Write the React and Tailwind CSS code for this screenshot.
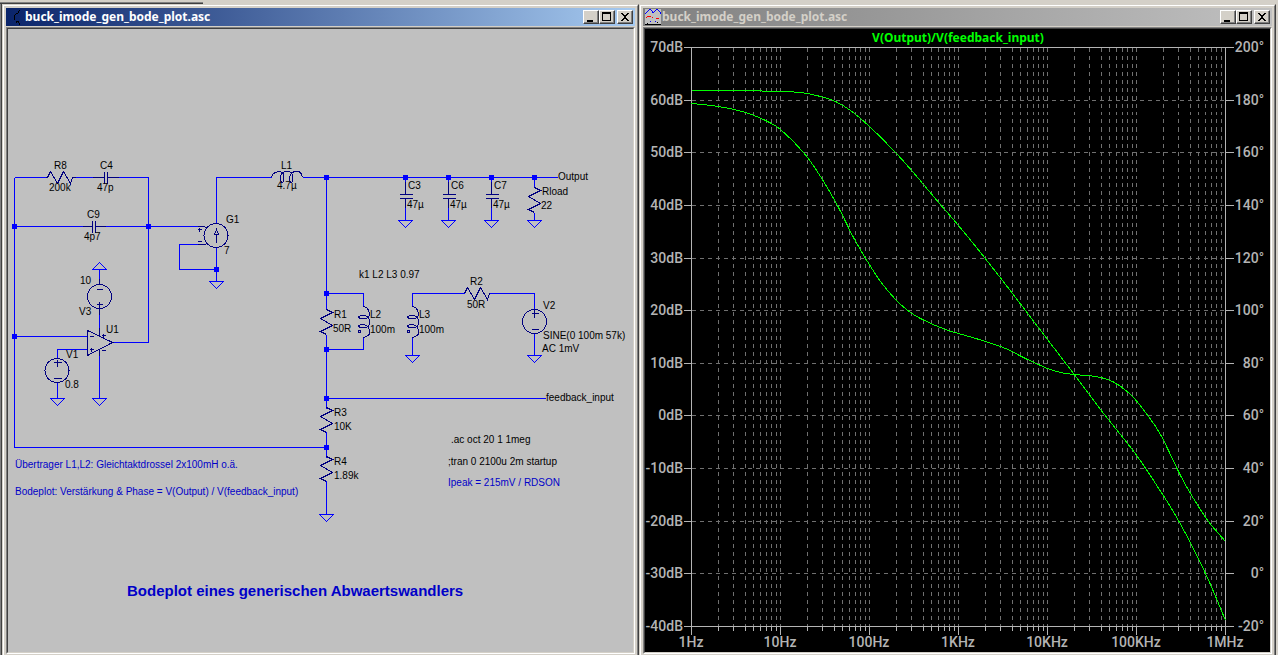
import React from "react";

/* ---------- window chrome ---------- */

function CaptionButton({ label, children }) {
  return (
    <button
      type="button"
      aria-label={label}
      className="flex h-[14px] w-4 items-center justify-center border border-t-white border-l-white border-r-[#404040] border-b-[#404040] bg-[#d4d0c8] p-0 shadow-[inset_-1px_-1px_0_#808080]"
    >
      <svg viewBox="0 0 14 12" className="h-3 w-[14px] shrink-0" shapeRendering="crispEdges" aria-hidden="true">
        {children}
      </svg>
    </button>
  );
}

function ChildWindow({ title, icon, barClass, clientClass, children }) {
  return (
    <section className="flex min-w-0 flex-1 flex-col border border-b-0 border-t-[#d4d0c8] border-l-[#d4d0c8] border-r-[#404040]">
      <div className="flex min-h-0 flex-1 flex-col border border-b-0 border-t-white border-l-white border-r-[#808080] p-[2px] pb-px">
        <header className={"flex h-[18px] shrink-0 items-center pr-[2px] pl-[2px] " + barClass}>
          {icon}
          <h2 className="ml-px min-w-0 flex-1 truncate font-['Noto_Sans','DejaVu_Sans',sans-serif] text-[12px] leading-5 font-bold">
            {title}
          </h2>
          <CaptionButton label="Minimize">
            <path d="M3 9h6v2h-6z" fill="#000" />
          </CaptionButton>
          <CaptionButton label="Maximize">
            <path d="M2 1h9v9h-9zM3 3v6h7v-6z" fill="#000" fillRule="evenodd" />
          </CaptionButton>
          <div className="ml-[2px] flex">
            <CaptionButton label="Close">
              <path d="M3 2h2v1h1v1h2v-1h1v-1h2v1h-1v1h-1v1h-1v2h1v1h1v1h1v1h-2v-1h-1v-1h-2v1h-1v1h-2v-1h1v-1h1v-1h1v-2h-1v-1h-1v-1h-1z" fill="#000" />
            </CaptionButton>
          </div>
        </header>
        <div className="mt-px flex min-h-0 flex-1 border border-t-[#808080] border-l-[#808080] border-r-white border-b-white">
          <div className={"min-h-0 min-w-0 flex-1 border border-t-[#404040] border-l-[#404040] border-r-[#d4d0c8] border-b-[#d4d0c8] " + clientClass}>
            {children}
          </div>
        </div>
      </div>
    </section>
  );
}

function SchematicIcon() {
  return (
    <svg viewBox="0 0 16 16" className="size-4 shrink-0" shapeRendering="crispEdges" aria-hidden="true">
      <path d="M11 1h1v1h-1zM10 2h1v2h-1zM8 4h2v1h-2zM7 5h1v1h-1zM6 6h1v5h-1zM9 12h2v1h-2zM8 12h1v2h-1zM10 13h1v1h-1zM11 14h1v2h-1z" fill="#000" />
    </svg>
  );
}

function PlotIcon() {
  return (
    <svg viewBox="0 0 16 16" className="size-4 shrink-0" shapeRendering="crispEdges" aria-hidden="true">
      <rect width="16" height="16" fill="#c0c0c0" />
      <path d="M0 4h1v1h-1zM1 3h1v1h-1zM2 2h1v1h-1zM3 1h1v1h-1zM4 0h2v1h-2zM6 1h1v1h-1zM7 2h1v2h-1zM8 3h1v1h-1zM9 2h1v1h-1zM10 1h1v1h-1zM11 0h2v1h-2zM13 1h1v1h-1zM14 2h1v1h-1zM15 3h1v2h-1z" fill="#00f" />
      <path d="M2 7h4v1h-4zM1 8h1v1h-1zM7 8h1v1h-1zM11 9h3v1h-3z" fill="#f00" />
      <path d="M5 12h1v1h-1zM10 12h1v1h-1z" fill="#00f" />
      <path d="M2 14h1v1h-1zM12 13h1v1h-1zM0 15h16v1h-16z" fill="#000" />
    </svg>
  );
}

/* ---------- schematic ---------- */

const WIRES =
  "M14 177H45M75 177H92M118 177H148M14 177V447H326M148 177V342H112M14 226H82M105 226H197M14 336H87" +
  "M216 222V177H271M216 247V281M197 244H179V269H216M302 177H557M326 177V309" +
  "M405 177V181M405 207V220M448 177V181M448 207V220M491 177V181M491 207V220M534 177V186M534 212V220" +
  "M326 334V408M326 431V457M326 480V514M326 293H363V306M363 337V349H326M326 398H545" +
  "M412 306V293H464M489 293H534V309M534 333V355M412 337V355" +
  "M99 269V284M99 308V336M57 358V349H87M57 382V398M99 349V398";

const SYMBOL_LEADS =
  "M45 177H47M72 177H75M92 177H104M107 177H118M104 171V183M107 171V183" +
  "M82 226H92M95 226H105M92 220V232M95 220V232" +
  "M197 226H204L207 229M197 244H205M197 229H201M199 227V231M197 241H201" +
  "M216 242V233M216 229L214 234H218Z" +
  "M96 289H102M96 304H102M99 301V308M99 308V314M99 278V284" +
  "M87 330V355L112 342ZM89 336H93M89 349H93M91 347V351M101 335H105M103 333V337M101 350H105" +
  "M53 362H61M57 359V366M53 378H61" +
  "M531 313H538M534 309V317M531 329H538" +
  "M99 327V336M99 349V355";

const NODES = [
  [14, 226], [148, 226], [14, 336], [216, 269], [326, 177], [405, 177], [448, 177],
  [491, 177], [534, 177], [326, 293], [326, 349], [326, 398], [326, 447],
];

const GROUNDS = [
  [216, 281], [405, 220], [448, 220], [491, 220], [534, 220], [326, 514],
  [412, 355], [534, 355], [57, 398], [99, 398],
];

const LABELS = [
  [54, 169, "R8"], [49, 191, "200k"], [100, 169, "C4"], [97, 191, "47p"],
  [87, 218, "C9"], [84, 240, "4p7"], [226, 223, "G1"], [224, 254, "7"],
  [281, 169, "L1"], [277, 189, "4.7µ"], [558, 180, "Output"],
  [408, 189, "C3"], [407, 208, "47µ"], [451, 189, "C6"], [450, 208, "47µ"],
  [494, 189, "C7"], [493, 208, "47µ"], [542, 195, "Rload"], [541, 209, "22"],
  [80, 284, "10"], [79, 315, "V3"], [106, 333, "U1"], [66, 358, "V1"], [65, 388, "0.8"],
  [359, 278, "k1 L2 L3 0.97"], [334, 318, "R1"], [333, 332, "50R"],
  [370, 318, "L2"], [370, 333, "100m"], [419, 318, "L3"], [419, 333, "100m"],
  [470, 285, "R2"], [467, 308, "50R"], [543, 309, "V2"],
  [543, 339, "SINE(0 100m 57k)"], [542, 352, "AC 1mV"], [546, 401, "feedback_input"],
  [334, 416, "R3"], [334, 430, "10K"], [334, 465, "R4"], [334, 479, "1.89k"],
  [451, 443, ".ac oct 20 1 1meg"], [448, 465, ";tran 0 2100u 2m startup"],
];

const COMMENTS = [
  [448, 486, "Ipeak = 215mV / RDSON"],
  [15, 468, "Übertrager L1,L2: Gleichtaktdrossel 2x100mH o.ä."],
  [15, 495, "Bodeplot: Verstärkung & Phase = V(Output) / V(feedback_input)"],
];

const ResistorV = ({ x, y }) => <path d={`M${x} ${y}l6 3l-12 6l12 7l-12 6l6 3`} />;
const ResistorH = ({ x, y }) => <path d={`M${x} ${y}l3 -6l7 12l6 -12l7 12l2 -6`} />;
const CapacitorV = ({ x }) => (
  <path d={`M${x} 181V194M${x - 6} 194H${x + 7}M${x - 6} 198H${x + 7}M${x} 198V207`} />
);
const Coil = ({ transform }) => (
  <path
    transform={transform}
    d="M0 0C1 -6 10 -8 12 -3C13 7 9 7 9 0C9 -7 19 -8 21 -3C22 7 18 7 18 0C19 -7 28 -8 30 -3L31 0"
  />
);

function Schematic() {
  return (
    <svg
      viewBox="8 29 625 623"
      className="block h-full w-full font-['Liberation_Sans',Arial,sans-serif] text-[10px]"
      role="img"
      aria-label="Buck converter schematic"
    >
      <g transform="translate(.5 .5)" fill="none" shapeRendering="crispEdges">
        <g stroke="#0000ff">
          <path d={WIRES} />
          {GROUNDS.map(([x, y]) => (
            <path key={x + "-" + y} d={`M${x - 7} ${y}h14l-7 7z`} />
          ))}
          <path d="M92 269h14l-7 -7z" />
          {NODES.map(([x, y]) => (
            <rect key={x + "-" + y} x={x - 2} y={y - 2} width="4" height="4" fill="#0000ff" />
          ))}
        </g>
        <g stroke="#000080">
          <path d={SYMBOL_LEADS} />
          <ResistorH x={47} y={177} />
          <ResistorH x={464} y={293} />
          <ResistorV x={534} y={187} />
          <ResistorV x={326} y={309} />
          <ResistorV x={326} y={407} />
          <ResistorV x={326} y={456} />
          <CapacitorV x={405} />
          <CapacitorV x={448} />
          <CapacitorV x={491} />
          <Coil transform="translate(271 177)" />
          <Coil transform="translate(363 306) rotate(90)" />
          <Coil transform="translate(412 306) rotate(90)" />
          <rect x="358" y="330" width="2" height="2" />
          <rect x="407" y="330" width="2" height="2" />
          <circle cx="215.5" cy="235" r="12" />
          <circle cx="99" cy="296" r="12" />
          <circle cx="56.5" cy="370" r="12" />
          <circle cx="534" cy="321" r="12" />
        </g>
      </g>
      <g fill="#000">
        {LABELS.map(([x, y, t]) => (
          <text key={x + "-" + y} x={x} y={y}>{t}</text>
        ))}
      </g>
      <g fill="#0000c8">
        {COMMENTS.map(([x, y, t]) => (
          <text key={y} x={x} y={y}>{t}</text>
        ))}
        <text x="127" y="596" className="text-[15px] font-bold">
          Bodeplot eines generischen Abwaertswandlers
        </text>
      </g>
    </svg>
  );
}

/* ---------- bode plot ---------- */

const LEFT = 691;
const RIGHT = 1225;
const TOP = 47;
const BOTTOM = 626;
const DECADE = 89;

const rowY = (i) => Math.round(TOP + (i * (BOTTOM - TOP)) / 11);
const ROWS = Array.from({ length: 12 }, (_, i) => ({
  y: rowY(i),
  gain: `${70 - i * 10}dB`,
  phase: `${200 - i * 20}°`,
}));
const FREQUENCIES = ["1Hz", "10Hz", "100Hz", "1KHz", "10KHz", "100KHz", "1MHz"];
const COLUMNS = [];
for (let d = 0; d < 6; d++) {
  for (let m = 2; m <= 10; m++) {
    COLUMNS.push({ x: Math.round(LEFT + DECADE * (d + Math.log10(m))), major: m === 10 });
  }
}

const GAIN = [
  [691, 90], [740, 90], [776, 91], [800, 92], [820, 96], [835, 101], [850, 110], [869, 126],
  [895, 152], [912, 171], [923, 184], [939, 203], [958, 225], [984, 257], [1012, 293],
  [1047, 339], [1073, 373], [1100, 409], [1134, 452], [1155, 483], [1178, 520], [1205, 573], [1225, 620],
];
const PHASE = [
  [691, 103], [718, 106], [745, 112], [765, 120], [780, 129], [803, 152], [820, 176], [838, 207],
  [853, 237], [867, 261], [880, 281], [896, 300], [910, 312], [924, 320], [945, 329], [965, 335],
  [985, 341], [1005, 348], [1025, 358], [1047, 368], [1060, 372], [1073, 374], [1095, 376],
  [1112, 381], [1130, 394], [1145, 412], [1160, 434], [1180, 475], [1193, 498], [1208, 521], [1225, 541],
];

/* Catmull-Rom spline through the samples, written as cubic segments */
function spline(points) {
  let d = `M${points[0].join(" ")}`;
  for (let i = 0; i < points.length - 1; i++) {
    const p0 = points[i - 1] || points[i];
    const p1 = points[i];
    const p2 = points[i + 1];
    const p3 = points[i + 2] || p2;
    d += `C${p1[0] + (p2[0] - p0[0]) / 6} ${p1[1] + (p2[1] - p0[1]) / 6} ${p2[0] - (p3[0] - p1[0]) / 6} ${p2[1] - (p3[1] - p1[1]) / 6} ${p2[0]} ${p2[1]}`;
  }
  return d;
}

function BodePlot() {
  return (
    <svg
      viewBox="645 29 625 623"
      className="block h-full w-full font-['Roboto','Liberation_Sans',sans-serif] text-[14px] font-medium"
      role="img"
      aria-label="Bode plot of V(Output)/V(feedback_input)"
    >
      <g transform="translate(.5 .5)" fill="none" shapeRendering="crispEdges">
        <g stroke="#707070" strokeDasharray="4 4">
          {COLUMNS.slice(0, -1).map(({ x }) => (
            <path key={x} d={`M${x} ${TOP}V${BOTTOM}`} />
          ))}
          {ROWS.slice(1, -1).map(({ y }) => (
            <path key={y} d={`M${LEFT} ${y}H${RIGHT}`} />
          ))}
        </g>
        <g stroke="#b4b4b4">
          <path d={`M${LEFT} ${TOP}V${BOTTOM + 8}M${RIGHT} ${TOP}V${BOTTOM}M${LEFT} ${TOP}H${RIGHT}M${LEFT} ${BOTTOM}H${RIGHT}`} />
          {ROWS.map(({ y }) => (
            <path key={y} d={`M${LEFT - 8} ${y}h8M${RIGHT} ${y}h8`} />
          ))}
          {COLUMNS.map(({ x, major }) => (
            <path key={x} d={`M${x} ${BOTTOM}v${major ? 8 : 4}`} />
          ))}
        </g>
        <g stroke="#00ff00">
          <path d={spline(GAIN)} />
          <path d={spline(PHASE)} />
        </g>
      </g>
      <g fill="#b4b4b4" stroke="none">
        {ROWS.map(({ y, gain, phase }) => (
          <g key={y}>
            <text x="683" y={y + 5} textAnchor="end">{gain}</text>
            <text x="1264" y={y + 5} textAnchor="end">{phase}</text>
          </g>
        ))}
        {FREQUENCIES.map((label, i) => (
          <text key={label} x={LEFT + i * DECADE} y="647" textAnchor="middle">{label}</text>
        ))}
      </g>
      <text x="958" y="42" textAnchor="middle" fill="#00ff00" className="font-['Noto_Sans','DejaVu_Sans',sans-serif] text-[12px] font-bold">
        V(Output)/V(feedback_input)
      </text>
    </svg>
  );
}

export default function App() {
  return (
    <main className="flex h-screen flex-col overflow-hidden bg-[#d4d0c8]">
      <div className="h-1 shrink-0 pt-[2px]">
        <div className="h-[2px] w-[203px] border-t border-b border-t-[#808080] border-b-[#404040]" />
      </div>
      <div className="flex min-h-0 flex-1 border-l border-l-[#808080] pr-[2px]">
        <div className="w-px shrink-0 bg-[#404040]" />
        <ChildWindow
          title="buck_imode_gen_bode_plot.asc"
          icon={<SchematicIcon />}
          barClass="bg-linear-to-r/srgb from-[#0a246a] to-[#a6caf0] text-white"
          clientClass="bg-[#c0c0c0]"
        >
          <Schematic />
        </ChildWindow>
        <ChildWindow
          title="buck_imode_gen_bode_plot.asc"
          icon={<PlotIcon />}
          barClass="bg-linear-to-r/srgb from-[#808080] to-[#c0c0c0] text-[#d4d0c8]"
          clientClass="bg-black"
        >
          <BodePlot />
        </ChildWindow>
      </div>
    </main>
  );
}
